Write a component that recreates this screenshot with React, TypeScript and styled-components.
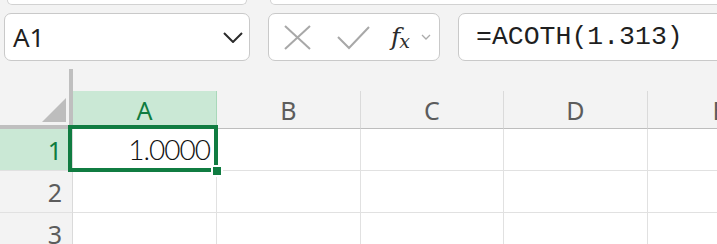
import React from 'react';
import styled, { createGlobalStyle } from 'styled-components';

const GlobalStyle = createGlobalStyle`
  html, body {
    margin: 0;
    padding: 0;
    background: #f3f3f3;
    overflow: hidden;
  }
  body {
    font-family: "Noto Sans", "Open Sans", sans-serif;
  }
`;

const Page = styled.div`
  width: 717px;
  height: 244px;
  overflow: hidden;
  background: #f3f3f3;
`;

const TopStrip = styled.div`
  display: flex;
  gap: 23px;
  padding-left: 7px;
  height: 5px;
`;

const TopTab = styled.div<{ $width?: number }>`
  flex: ${(p) => (p.$width ? `0 0 ${p.$width}px` : '1 1 auto')};
  margin-right: ${(p) => (p.$width ? '0' : '-20px')};
  height: 4px;
  background: #ffffff;
  border: 1px solid #d2d2d2;
  border-top: none;
  border-radius: 0 0 8px 8px;
`;

const Toolbar = styled.div`
  display: flex;
  gap: 18px;
  margin-top: 8px;
  padding-left: 4px;
  height: 48px;
`;

const Box = styled.div<{ $width: number }>`
  flex: 0 0 ${(p) => p.$width}px;
  box-sizing: border-box;
  height: 48px;
  display: flex;
  align-items: center;
  background: #ffffff;
  border: 1px solid #c9c9c9;
  border-radius: 7px;
`;

const NameText = styled.span`
  flex: 1;
  padding-left: 8px;
  font-size: 26px;
  color: #1f1f1f;
`;

const Chevron = styled.svg`
  margin-right: 6px;
`;

const IconSlot = styled.span<{ $ml: number }>`
  display: flex;
  margin-left: ${(p) => p.$ml}px;
`;

const Fx = styled.span`
  margin-left: 21px;
  font-family: "DejaVu Serif", "Liberation Serif", serif;
  font-style: italic;
  font-size: 25px;
  color: #2b2b2b;
  line-height: 1;
  letter-spacing: -1px;

  sub {
    font-size: 19px;
    vertical-align: -3px;
  }
`;

const Formula = styled.span`
  padding-left: 17px;
  font-family: "Liberation Mono", "DejaVu Sans Mono", monospace;
  font-size: 26.5px;
  color: #1f1f1f;
  white-space: nowrap;
`;

const Sheet = styled.div`
  display: grid;
  grid-template-columns: 73px 144px 144px 143px 144px 144px;
  grid-template-rows: 60px 42px 42px 42px;
  margin-top: 8px;
`;

const Corner = styled.div`
  position: relative;
  box-sizing: border-box;
  border-right: 4px solid #bfbfbf;
  border-bottom: 4px solid #bfbfbf;
  background: #f3f3f3;
`;

const CornerTriangle = styled.svg`
  position: absolute;
  right: 3px;
  bottom: 3px;
`;

const ColHeader = styled.div<{ $active?: boolean }>`
  align-self: end;
  box-sizing: border-box;
  height: 38px;
  display: flex;
  align-items: center;
  justify-content: center;
  font-size: 25px;
  color: ${(p) => (p.$active ? '#0f7b3f' : '#5c5c5c')};
  background: ${(p) => (p.$active ? '#cae8d5' : '#f3f3f3')};
  border-right: 1px solid ${(p) => (p.$active ? '#a9d8ba' : '#dadada')};
  border-bottom: 1px solid #bdbdbd;
`;

const RowHeader = styled.div<{ $active?: boolean }>`
  box-sizing: border-box;
  display: flex;
  align-items: center;
  justify-content: flex-end;
  padding-right: 10px;
  font-size: 25px;
  color: ${(p) => (p.$active ? '#0f7b3f' : '#5c5c5c')};
  background: ${(p) => (p.$active ? '#cae8d5' : '#f3f3f3')};
  border-right: 1px solid #dadada;
  border-bottom: 1px solid #e1e1e1;
`;

const Cell = styled.div`
  position: relative;
  box-sizing: border-box;
  display: flex;
  align-items: center;
  justify-content: flex-end;
  padding-right: 6px;
  background: #ffffff;
  border-right: 1px solid #e1e1e1;
  border-bottom: 1px solid #e1e1e1;
`;

const Value = styled.span`
  font-family: "Lato", "Open Sans", sans-serif;
  font-weight: 300;
  font-size: 28px;
  letter-spacing: -1px;
  color: #111111;
  margin-top: -2px;
`;

const Selection = styled.div`
  position: absolute;
  z-index: 2;
  top: -4px;
  left: -5px;
  right: -2px;
  bottom: -2px;
  border: 4px solid #107c41;
  pointer-events: none;
`;

const FillHandle = styled.div`
  position: absolute;
  z-index: 3;
  left: 138px;
  top: 36px;
  width: 8px;
  height: 8px;
  background: #107c41;
  border: 2px solid #ffffff;
`;

const columns = ['A', 'B', 'C', 'D', 'E'];
const rows = [1, 2, 3];

const App: React.FC = () => {
  return (
    <Page>
      <GlobalStyle />
      <TopStrip>
        <TopTab $width={238} />
        <TopTab />
      </TopStrip>

      <Toolbar>
        <Box $width={246}>
          <NameText>A1</NameText>
          <Chevron width="20" height="11" viewBox="0 0 20 11">
            <polyline points="1,1 10,10 19,1" fill="none" stroke="#2b2b2b" strokeWidth="2" />
          </Chevron>
        </Box>

        <Box $width={172}>
          <IconSlot $ml={15}>
            <svg width="27" height="25" viewBox="0 0 27 25">
              <line x1="1" y1="1" x2="26" y2="24" stroke="#a8a8a8" strokeWidth="2" />
              <line x1="26" y1="1" x2="1" y2="24" stroke="#a8a8a8" strokeWidth="2" />
            </svg>
          </IconSlot>
          <IconSlot $ml={26}>
            <svg width="33" height="25" viewBox="0 0 33 25">
              <polyline points="1,12 12,23 32,2" fill="none" stroke="#a8a8a8" strokeWidth="2" />
            </svg>
          </IconSlot>
          <Fx>
            f<sub>x</sub>
          </Fx>
          <IconSlot $ml={12}>
            <svg width="10" height="6" viewBox="0 0 10 6">
              <polyline points="1,1 5,5 9,1" fill="none" stroke="#ababab" strokeWidth="1.3" />
            </svg>
          </IconSlot>
        </Box>

        <Box $width={320}>
          <Formula>=ACOTH(1.313)</Formula>
        </Box>
      </Toolbar>

      <Sheet>
        <Corner>
          <CornerTriangle width="24" height="24" viewBox="0 0 24 24">
            <polygon points="0,24 24,0 24,24" fill="#bdbdbd" />
          </CornerTriangle>
        </Corner>
        {columns.map((c) => (
          <ColHeader key={c} $active={c === 'A'}>
            {c}
          </ColHeader>
        ))}

        {rows.map((r) => (
          <React.Fragment key={r}>
            <RowHeader $active={r === 1}>{r}</RowHeader>
            {columns.map((c) => (
              <Cell key={c}>
                {r === 1 && c === 'A' && (
                  <>
                    <Value>1.0000</Value>
                    <Selection />
                    <FillHandle />
                  </>
                )}
              </Cell>
            ))}
          </React.Fragment>
        ))}
      </Sheet>
    </Page>
  );
};

export default App;
